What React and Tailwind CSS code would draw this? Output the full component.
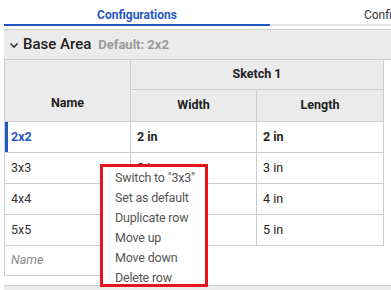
import React from 'react'

const ROWS = [
  { name: '2x2', width: '2 in', length: '2 in', active: true },
  { name: '3x3', width: '3 in', length: '3 in' },
  { name: '4x4', width: '4 in', length: '4 in' },
  { name: '5x5', width: '5 in', length: '5 in' },
]

const MENU = ['Switch to "3x3"', 'Set as default', 'Duplicate row', 'Move up', 'Move down', 'Delete row']

export default function App() {
  return (
    <div
      className="relative w-[391px] h-[290px] overflow-hidden bg-white text-[#222]"
      style={{ fontFamily: 'Roboto, "Noto Sans", sans-serif' }}
    >
      {/* Tabs */}
      <div className="flex h-[26px] pl-[4px]">
        <div className="w-[266px] shrink-0 flex items-center justify-center border-b-2 border-[#1f57c3] text-[12px] font-bold text-[#1f57c3] pt-[5px]">
          Configurations
        </div>
        <div className="w-[266px] shrink-0 flex items-center justify-center border-b-2 border-[#e6e6e6] text-[12px] text-[#333] pt-[5px]">
          Configurations
        </div>
      </div>

      <div className="pl-[4px]">
        {/* Section header */}
        <div className="h-[31px] mt-[3px] flex items-center bg-[#ebebeb] border-y border-[#cfcfcf] pl-[5px]">
          <svg width="10" height="10" viewBox="0 0 10 10" className="mr-[4px] mt-[1px]">
            <path d="M1.5 3.5 L5 7 L8.5 3.5" fill="none" stroke="#333" strokeWidth="1.6" />
          </svg>
          <span className="text-[15px] font-medium text-[#222]">Base Area</span>
          <span className="ml-[7px] text-[13px] font-bold text-[#9a9a9a]">Default: 2x2</span>
        </div>

        {/* Table */}
        <table className="border-collapse text-[12.5px] table-fixed w-[379px] -mt-[1px]">
          <colgroup>
            <col className="w-[126px]" />
            <col className="w-[126px]" />
            <col className="w-[127px]" />
          </colgroup>
          <thead>
            <tr className="h-[30px]">
              <th rowSpan={2} className="bg-[#ebebeb] border border-[#cdcdcd] align-bottom pb-[8px] font-bold text-[#222]">
                Name
              </th>
              <th colSpan={2} className="bg-[#ebebeb] border border-[#cdcdcd] font-bold text-[#222]">
                Sketch 1
              </th>
            </tr>
            <tr className="h-[32px]">
              <th className="bg-[#ebebeb] border border-[#cdcdcd] font-bold text-[#222]">Width</th>
              <th className="bg-[#ebebeb] border border-[#cdcdcd] font-bold text-[#222]">Length</th>
            </tr>
          </thead>
          <tbody>
            {ROWS.map((r) => (
              <tr key={r.name} className="h-[31px]">
                <td
                  className={`border border-[#cdcdcd] pl-[6px] ${
                    r.active ? 'font-bold text-[#1f57c3] shadow-[inset_3px_0_0_#1f57c3]' : 'text-[#333]'
                  }`}
                >
                  {r.name}
                </td>
                <td className={`border border-[#cdcdcd] pl-[6px] ${r.active ? 'font-bold' : ''}`}>{r.width}</td>
                <td className={`border border-[#cdcdcd] pl-[6px] ${r.active ? 'font-bold' : ''}`}>{r.length}</td>
              </tr>
            ))}
            <tr className="h-[30px]">
              <td className="border border-[#cdcdcd] pl-[6px] italic text-[#8a8a8a]">Name</td>
              <td />
              <td />
            </tr>
          </tbody>
        </table>

        {/* Next section */}
        <div className="mt-[9px] h-[20px] bg-[#ebebeb] border-t border-[#cfcfcf]" />
      </div>

      {/* Context menu */}
      <div className="absolute left-[100px] top-[164px] w-[108px] h-[123px] bg-white border-[3px] border-[#e8141b] pt-[1px] pl-[12px]">
        {MENU.map((m) => (
          <div key={m} className="h-[20px] flex items-center text-[12.5px] tracking-[-0.2px] text-[#555] whitespace-nowrap">
            {m}
          </div>
        ))}
      </div>
    </div>
  )
}
